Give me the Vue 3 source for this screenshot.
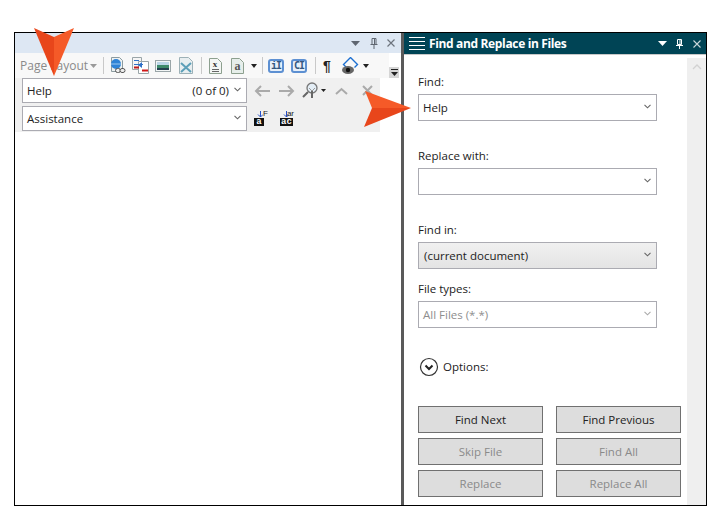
<script setup>
const fields = [
  { label: 'Find:', value: 'Help', top: 7, kind: '' },
  { label: 'Replace with:', value: '', top: 26, kind: '' },
  { label: 'Find in:', value: '(current document)', top: 26, kind: 'select' },
  { label: 'File types:', value: 'All Files (*.*)', top: 11, kind: 'disabled' },
]
const buttons = [
  { t: 'Find Next', off: false }, { t: 'Find Previous', off: false },
  { t: 'Skip File', off: true }, { t: 'Find All', off: true },
  { t: 'Replace', off: true }, { t: 'Replace All', off: true },
]
</script>

<template>
  <div class="page">
    <div class="frame">
      <section class="left">
        <div class="band">
          <svg width="9" height="5" viewBox="0 0 9 5"><path d="M0 0h9L4.500 5z" fill="#5f6670"/></svg>
          <svg class="pin" width="8" height="11" viewBox="0 0 8 11"><path d="M2 .500h4v6H2zM4.500 .500v6M.500 6.500h7M4 7v4" fill="none" stroke="#5f6670"/></svg>
          <svg width="8" height="8" viewBox="0 0 8 8"><path d="M.500.500l7 7M7.500.500l-7 7" stroke="#6d747d" stroke-width="1.200"/></svg>
        </div>
        <div class="toolbar">
          <span class="tb-text">Page Layout</span>
          <svg class="ml4" width="7" height="4" viewBox="0 0 7 4"><path d="M0 0h7L3.500 4z" fill="#9a9a9a"/></svg>
          <i class="sep ml6"></i>
          <svg class="ml6" width="16" height="20" viewBox="0 0 16 20"><path d="M1.500 1.500h8l3 3v11h-11z" fill="#eef2f2" stroke="#8c9ba0"/><circle cx="6" cy="8" r="5" fill="#2f83d6"/><path d="M1 8h10" stroke="#9cc8ef"/><rect x="5.500" y="12.500" width="5" height="4" rx="2" fill="#eee" stroke="#555"/><rect x="10" y="12.500" width="5" height="4" rx="2" fill="#eee" stroke="#555"/></svg>
          <svg class="ml6" width="17" height="17" viewBox="0 0 17 17"><path d="M.500.500h9v12h-9z" fill="#f5f5f5" stroke="#9aa5a8"/><path d="M6.500 4.500h10v12h-10z" fill="#fff" stroke="#9aa5a8"/><path d="M2 3.500h5M2 7.500h9" stroke="#2f70c8"/><path d="M6 8l4-3v6z" fill="#2f70c8"/><path d="M2 10.500h5" stroke="#c01818" stroke-width="2"/><path d="M10 13.500h6" stroke="#d01818" stroke-width="2"/></svg>
          <svg class="ml6" width="16" height="12" viewBox="0 0 16 12"><rect x=".500" y=".500" width="15" height="11" fill="#f3f6f6" stroke="#9aa5a8"/><rect x="2" y="2" width="12" height="3" fill="#bcd6e8"/><rect x="2" y="5" width="12" height="3" fill="#3d8a6a"/><rect x="2" y="8" width="12" height="2" fill="#24404f"/></svg>
          <svg class="ml8" width="14" height="17" viewBox="0 0 14 17"><path d="M.500.500h9l4 4v12h-13z" fill="#e8eef0" stroke="#9db1b7"/><path d="M2 6l10 9M12 6L2 15" stroke="#5c9fb8" stroke-width="2"/></svg>
          <i class="sep ml8"></i>
          <svg class="ml7" width="13" height="16" viewBox="0 0 13 16"><path d="M.500.500h8l4 4v11h-12z" fill="#f4f6f4" stroke="#8da08f"/><text x="6" y="9" class="doc-x">x</text><path d="M3 11.500h7M3 13.500h7" stroke="#666"/></svg>
          <svg class="ml9" width="13" height="16" viewBox="0 0 13 16"><path d="M.500.500h8l4 4v11h-12z" fill="#e6eeea" stroke="#8da08f"/><text x="6.500" y="12" class="doc-a">a</text></svg>
          <svg class="ml7" width="6" height="4" viewBox="0 0 6 4"><path d="M0 0h6L3 4z" fill="#222"/></svg>
          <i class="sep ml5"></i>
          <span class="blue-btn ml5">iI</span>
          <span class="blue-btn ml7">CI</span>
          <i class="sep ml8"></i>
          <span class="pilcrow ml7">¶</span>
          <svg class="ml10" width="17" height="18" viewBox="0 0 17 18"><path d="M8.500 .500l7 7-3 3M8.500 .500l-7 7 3 3" fill="none" stroke="#1c6fd0" stroke-width="1.400"/><ellipse cx="6" cy="13" rx="6" ry="4" fill="#666"/><circle cx="6" cy="13" r="2.200" fill="#111"/></svg>
          <svg class="ml4" width="6" height="4" viewBox="0 0 6 4"><path d="M0 0h6L3 4z" fill="#222"/></svg>
        </div>
        <div class="find-area">
          <div class="find-row">
            <div class="combo"><span class="grow">Help</span><span class="count">(0 of 0)</span><svg class="chev" width="7" height="5" viewBox="0 0 7 5"><path d="M.500.800l3 3 3-3" fill="none" stroke="#666" stroke-width="1.100"/></svg></div>
            <svg class="ml7" width="16" height="12" viewBox="0 0 16 12"><path d="M16 6H2M7 1L2 6l5 5" fill="none" stroke="#aaa" stroke-width="2"/></svg>
            <svg class="ml9" width="16" height="12" viewBox="0 0 16 12"><path d="M0 6h14M9 1l5 5-5 5" fill="none" stroke="#aaa" stroke-width="2"/></svg>
            <svg class="ml7" width="18" height="17" viewBox="0 0 18 17"><circle cx="10" cy="6" r="5" fill="#e4eef6" stroke="#777" stroke-width="1.300"/><path d="M7 6l3 3 3-3" fill="none" stroke="#999"/><path d="M10 9v7M6 10l-5 5" stroke="#666" stroke-width="2"/></svg>
            <svg class="ml1" width="5" height="3" viewBox="0 0 5 3"><path d="M0 0h5L2.500 3z" fill="#222"/></svg>
            <svg class="ml9" width="13" height="8" viewBox="0 0 13 8"><path d="M1 7l5.500-5 5.500 5" fill="none" stroke="#aaa" stroke-width="2"/></svg>
            <svg class="ml14" width="11" height="11" viewBox="0 0 11 11"><path d="M1 1l9 9M10 1l-9 9" stroke="#aaa" stroke-width="2"/></svg>
          </div>
          <div class="find-row">
            <div class="combo"><span class="grow">Assistance</span><svg class="chev" width="7" height="5" viewBox="0 0 7 5"><path d="M.500.800l3 3 3-3" fill="none" stroke="#666" stroke-width="1.100"/></svg></div>
            <div class="case c1">
              <svg class="down" width="6" height="7" viewBox="0 0 6 7"><path d="M3.500 0v6M1 3.500L3.500 6 6 3.500" fill="none" stroke="#2450c8"/></svg>
              <em>F</em><b>a</b>
            </div>
            <div class="case c2">
              <svg class="down" width="6" height="7" viewBox="0 0 6 7"><path d="M3.500 0v6M1 3.500L3.500 6 6 3.500" fill="none" stroke="#2450c8"/></svg>
              <em>ar</em><b>ac</b>
            </div>
          </div>
        </div>
        <div class="scroll-btn">
          <svg width="7" height="7" viewBox="0 0 7 7"><path d="M0 0h7v1H0zM0 3h7L3.500 7z" fill="#222"/></svg>
        </div>
      </section>

      <section class="right">
        <header class="head">
          <svg width="16" height="13" viewBox="0 0 16 13"><path d="M0 .500h16M0 4.500h16M0 8.500h16M0 12.500h16" stroke="#fff"/></svg>
          <h1>Find and Replace in Files</h1>
          <svg class="h-drop" width="9" height="5" viewBox="0 0 9 5"><path d="M0 0h9L4.500 5z" fill="#fff"/></svg>
          <svg class="h-pin" width="7" height="10" viewBox="0 0 7 10"><path d="M1.500.500h4v5h-4zM4 .500v5M0 6.500h7M3.500 7v3" fill="none" stroke="#fff"/></svg>
          <svg class="h-x" width="8" height="8" viewBox="0 0 8 8"><path d="M.500.500l7 7M7.500.500l-7 7" stroke="#c9d6da" stroke-width="1.100"/></svg>
        </header>
        <div class="pane">
          <div class="form">
            <div v-for="f in fields" :key="f.label" class="field" :style="{ marginTop: f.top + 'px' }">
              <label>{{ f.label }}</label>
              <div class="box" :class="f.kind">
                <span>{{ f.value }}</span>
                <svg width="7" height="5" viewBox="0 0 7 5"><path d="M.500.800l3 3 3-3" fill="none" :stroke="f.kind === 'disabled' ? '#aaa' : '#666'" stroke-width="1.100"/></svg>
              </div>
            </div>
            <div class="options">
              <svg width="20" height="20" viewBox="0 0 20 20"><circle cx="10" cy="10" r="8.500" fill="none" stroke="#333" stroke-width="1.200"/><path d="M6.500 8.500l3.500 3.500 3.500-3.500" fill="none" stroke="#222" stroke-width="2"/></svg>
              <span class="opt-text">Options:</span>
            </div>
            <div class="btns">
              <div v-for="b in buttons" :key="b.t" class="btn" :class="{ off: b.off }">{{ b.t }}</div>
            </div>
          </div>
          <aside class="track">
            <svg width="10" height="6" viewBox="0 0 10 6"><path d="M1 5l4-4 4 4" fill="none" stroke="#d2d2d2" stroke-width="1.300"/></svg>
          </aside>
        </div>
      </section>
    </div>

    <svg class="arrow a-down" width="40" height="48" viewBox="0 0 40 48"><path d="M0 0L20 9V48z" fill="#e8461b"/><path d="M40 0L20 9V48z" fill="#f55a28"/></svg>
    <svg class="arrow a-right" width="47" height="36" viewBox="0 0 47 36"><path d="M1 0L47 17H8z" fill="#f55a28"/><path d="M0 36L47 17H8z" fill="#e8461b"/></svg>
  </div>
</template>

<style>
html, body { margin: 0; background: #fff; }
</style>

<style scoped>
.page {
  position: relative;
  width: 707px;
  height: 506px;
  padding: 32px 0 0 14px;
  box-sizing: border-box;
  overflow: hidden;
  font: 11.5px "Open Sans", "Noto Sans", sans-serif;
  color: #222;
}
.ml1 { margin-left: 1px; }
.ml4 { margin-left: 4px; }
.ml5 { margin-left: 5px; }
.ml6 { margin-left: 6px; }
.ml7 { margin-left: 7px; }
.ml8 { margin-left: 8px; }
.ml9 { margin-left: 9px; }
.ml10 { margin-left: 10px; }
.ml14 { margin-left: 14px; }
svg { flex: none; display: block; }
.frame {
  display: flex;
  width: 693px;
  height: 474px;
  box-sizing: border-box;
  border: 1px solid #000;
}
.left {
  position: relative;
  width: 386px;
  background: #fff;
  flex: none;
}
.band {
  height: 20px;
  background: #dde7f3;
  display: flex;
  align-items: center;
  justify-content: flex-end;
  padding-right: 6px;
}
.band .pin { margin: 0 9px 0 10px; }
.toolbar {
  width: 374px;
  height: 25px;
  box-sizing: border-box;
  background: #f8f8f8;
  display: flex;
  align-items: center;
  padding-left: 5px;
}
.tb-text { color: #8a8a8a; font-size: 12px; width: 66px; white-space: nowrap; }
.sep { width: 1px; height: 17px; background: #c9c9c9; flex: none; }
.doc-x { font: bold 9px "Liberation Serif", serif; fill: #333; text-anchor: middle; }
.doc-a { font: bold 12px "Liberation Serif", serif; fill: #555; text-anchor: middle; }
.blue-btn {
  width: 16px;
  height: 14px;
  box-sizing: border-box;
  border: 2px solid #5d90d2;
  border-radius: 3px;
  background: #e7f0fa;
  color: #34577f;
  font: bold 10px/10px "DejaVu Sans Mono", monospace;
  text-align: center;
  overflow: hidden;
  letter-spacing: -1px;
}
.pilcrow { font: bold 14px "Liberation Sans", sans-serif; color: #222; width: 9px; }
.find-area {
  width: 365px;
  height: 54px;
  background: #f0f0f0;
  padding-left: 7px;
  box-sizing: border-box;
}
.find-row {
  display: flex;
  align-items: center;
  height: 25px;
  margin-bottom: 3px;
}
.combo {
  display: flex;
  align-items: center;
  box-sizing: border-box;
  width: 225px;
  height: 25px;
  border: 1px solid #ababb2;
  background: #fff;
  padding: 0 5px 0 4px;
  flex: none;
}
.grow { flex: 1; }
.count { margin-right: 5px; }
.chev { margin-bottom: 3px; }
.case {
  position: relative;
  height: 16px;
  margin-top: -1px;
}
.case.c1 { width: 14px; margin-left: 7px; }
.case.c2 { width: 14px; margin-left: 12px; }
.case .down { position: absolute; left: 3px; top: 1px; }
.case b {
  position: absolute;
  left: 0;
  bottom: 0;
  height: 8px;
  min-width: 9px;
  text-align: center;
  background: #111;
  color: #fff;
  font: bold 9px/8px "Liberation Mono", monospace;
  padding: 0 1px;
  box-sizing: content-box;
}
.case.c1 b { min-width: 8px; }
.case em {
  position: absolute;
  right: 0;
  top: 0;
  font: normal 8px/8px "Liberation Sans", sans-serif;
  color: #222;
}
.scroll-btn {
  position: absolute;
  left: 374px;
  top: 34px;
  width: 10px;
  height: 11px;
  background: #d6d6d6;
  display: flex;
  align-items: center;
  justify-content: center;
}
.right {
  flex: 1;
  border-left: 3px solid #5a5a5a;
  display: flex;
  flex-direction: column;
  min-width: 0;
}
.head {
  height: 21px;
  flex: none;
  background: #004455;
  display: flex;
  align-items: center;
  padding-left: 5px;
  color: #fff;
}
.head h1 {
  margin: 0 0 0 4px;
  flex: 1;
  font: bold 12px "Open Sans", "Noto Sans", sans-serif;
  letter-spacing: -.35px;
}
.h-drop { margin-right: 9px; }
.h-pin { margin-right: 10px; }
.h-x { margin-right: 5px; }
.pane {
  flex: 1;
  display: flex;
  border-top: 1px solid #c8c8c8;
  min-height: 0;
}
.form { width: 283px; flex: none; padding: 0 0 0 14px; box-sizing: border-box; }
.field label { display: block; height: 18px; line-height: 18px; margin-bottom: 3px; }
.field:first-child { padding-top: 11px; }
.box {
  width: 239px;
  height: 27px;
  box-sizing: border-box;
  border: 1px solid #ababb2;
  display: flex;
  justify-content: space-between;
  align-items: center;
  padding: 0 5px 0 4px;
  background: #fff;
}
.box svg { margin-bottom: 3px; }
.box.select { background: linear-gradient(#f0f0f0, #e4e4e4); padding-left: 5px; }
.box.disabled { color: #8e8e8e; }
.options {
  display: flex;
  align-items: center;
  gap: 4px;
  margin: 29px 0 0 1px;
  height: 20px;
}
.opt-text { padding-bottom: 2px; }
.btns {
  display: grid;
  grid-template-columns: 125px 125px;
  grid-auto-rows: 27px;
  column-gap: 13px;
  row-gap: 5px;
  margin-top: 29px;
}
.btn {
  box-sizing: border-box;
  background: #ddd;
  border: 1px solid #707070;
  display: flex;
  align-items: center;
  justify-content: center;
}
.btn.off { color: #8a8a8a; }
.track {
  width: 19px;
  margin-top: 3px;
  background: #efefef;
  display: flex;
  justify-content: center;
  align-items: flex-start;
  padding-top: 6px;
  box-sizing: border-box;
}
.arrow { position: absolute; }
.a-down { left: 34px; top: 28px; }
.a-right { left: 364px; top: 91px; }
</style>
